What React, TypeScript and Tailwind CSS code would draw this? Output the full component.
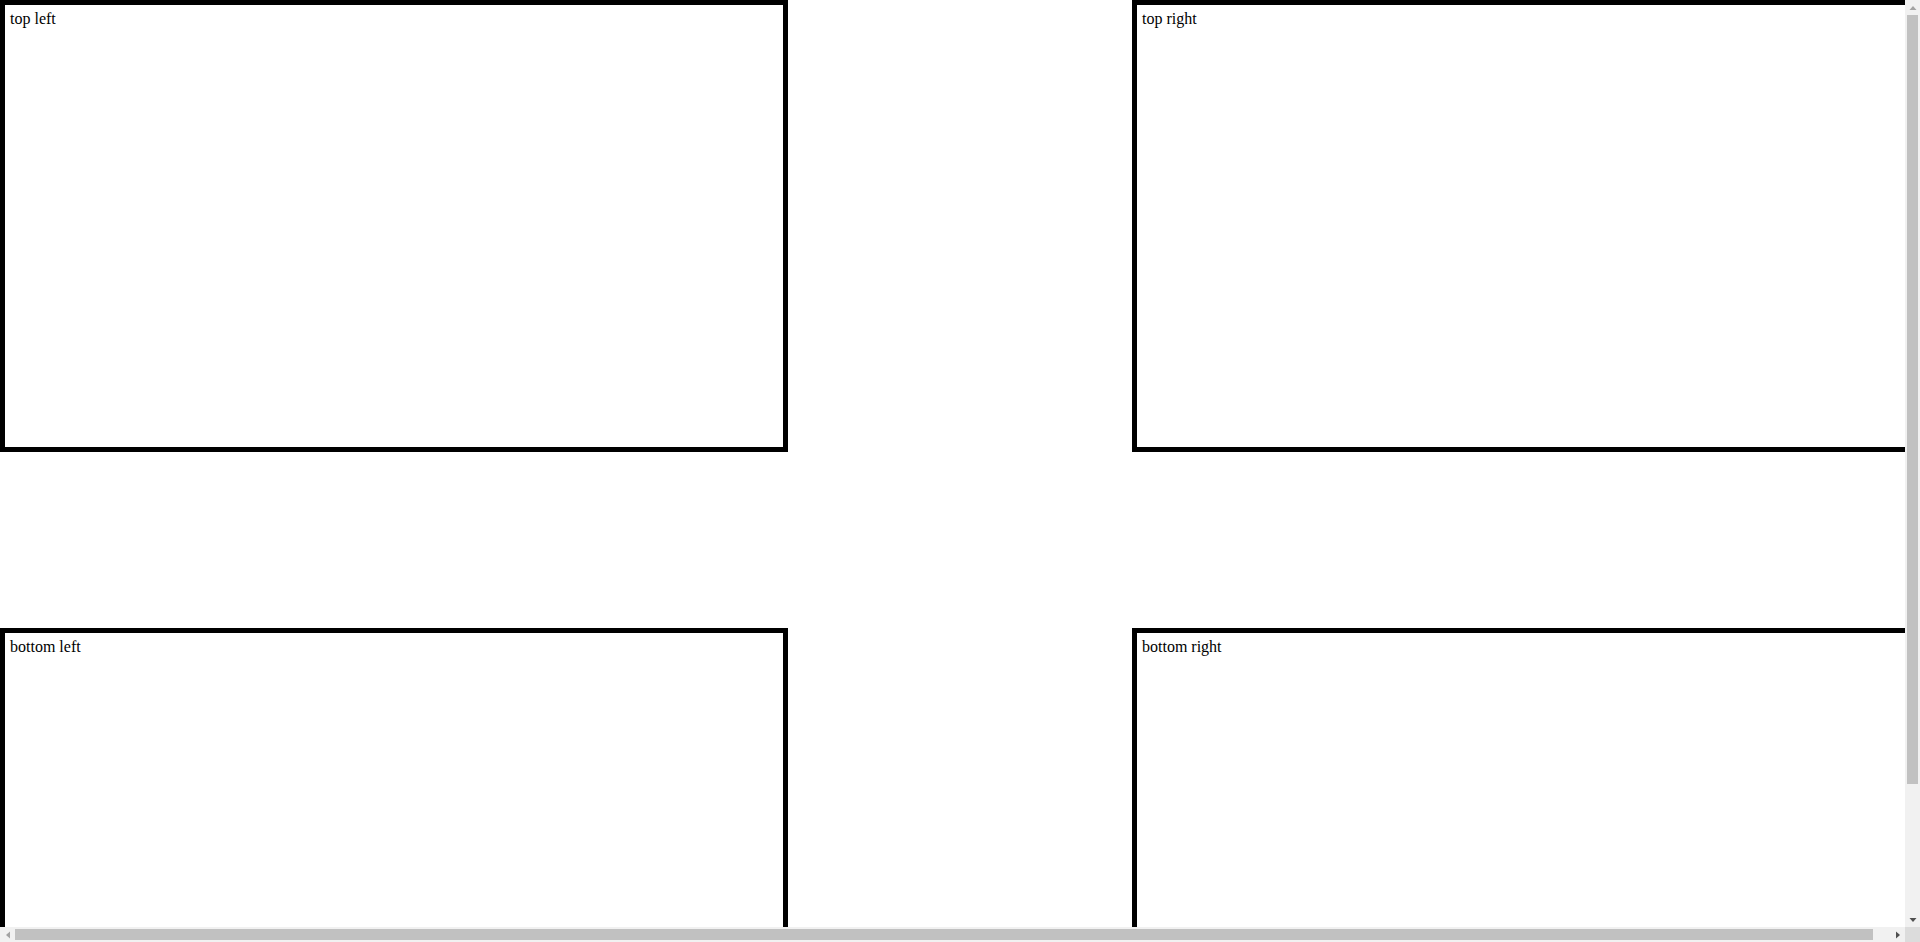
function Arrow({ dir, color }: { dir: "up" | "down" | "left" | "right"; color: string }) {
  const pts = {
    up: "0.5,6 7.5,6 4,2",
    down: "0.5,2 7.5,2 4,6",
    left: "6,0.5 6,7.5 2,4",
    right: "2,0.5 2,7.5 6,4",
  }[dir];
  return (
    <svg width="8" height="8" viewBox="0 0 8 8">
      <polygon points={pts} fill={color} />
    </svg>
  );
}

export default function App() {
  const box =
    "h-[452px] w-[788px] shrink-0 border-[5px] border-black p-[5px] text-[16px] leading-[normal]";
  return (
    <div className="flex h-screen w-screen flex-col overflow-hidden bg-white">
      <div className="flex min-h-0 flex-1">
        <div className="min-w-0 flex-1 overflow-hidden">
          <div className="flex h-[1080px] w-[1920px] flex-col justify-between font-['Liberation_Serif',serif] text-black">
            <div className="flex justify-between">
              <div className={box}>top left</div>
              <div className={box}>top right</div>
            </div>
            <div className="flex justify-between">
              <div className={box}>bottom left</div>
              <div className={box}>bottom right</div>
            </div>
          </div>
        </div>
        {/* vertical scrollbar */}
        <div className="flex w-[15px] shrink-0 flex-col items-center bg-[#f1f1f1]">
          <div className="flex h-[15px] items-center justify-center">
            <Arrow dir="up" color="#a3a3a3" />
          </div>
          <div className="h-[769px] w-[11px] bg-[#c1c1c1]" />
          <div className="flex-1" />
          <div className="flex h-[15px] items-center justify-center">
            <Arrow dir="down" color="#505050" />
          </div>
        </div>
      </div>
      <div className="flex h-[15px] shrink-0">
        {/* horizontal scrollbar */}
        <div className="flex flex-1 items-center bg-[#f1f1f1]">
          <div className="flex w-[15px] justify-center">
            <Arrow dir="left" color="#a3a3a3" />
          </div>
          <div className="h-[11px] w-[1858px] bg-[#c1c1c1]" />
          <div className="flex-1" />
          <div className="flex w-[15px] justify-center">
            <Arrow dir="right" color="#505050" />
          </div>
        </div>
        <div className="w-[15px] bg-[#dcdcdc]" />
      </div>
    </div>
  );
}
